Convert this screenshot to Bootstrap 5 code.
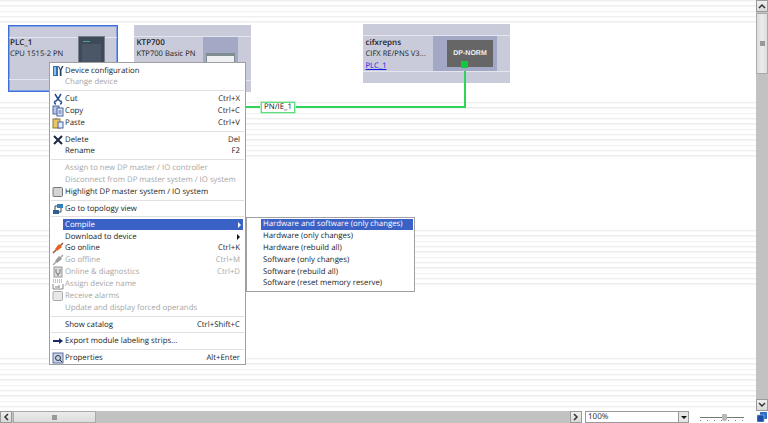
<!DOCTYPE html>
<html lang="en">
<head>
<meta charset="utf-8">
<title>Devices and networks</title>
<link rel="stylesheet" href="https://cdn.jsdelivr.net/npm/bootstrap@5.3.0/dist/css/bootstrap.min.css">
<style>
html,body{height:423px;overflow:hidden;background:#fff}
body{font-family:"Open Sans","Noto Sans",sans-serif;font-size:7.8px;color:#222;line-height:12px;text-rendering:geometricPrecision}
.shell{width:768px;height:423px}
.upper{height:411px;flex:none}
.sheet{width:756px;height:411px;overflow:hidden;
 background-color:#fff;
 background-image:repeating-linear-gradient(to bottom,#ececec 0,#f2f2f2 1px,#fff 2px,#fff 5.33px),repeating-linear-gradient(to bottom,#ececec 0,#f2f2f2 1px,#fff 2px,#fff 5.33px),repeating-linear-gradient(to bottom,#ececec 0,#f2f2f2 1px,#fff 2px,#fff 5.33px),repeating-linear-gradient(to bottom,#ececec 0,#f2f2f2 1px,#fff 2px,#fff 5.33px);
 background-repeat:no-repeat;background-size:100% 23px,100% 55px,100% 55px,100% 53px;background-position:0 0,0 102px,0 230px,0 358px}
.vbar{width:12px;background:#c2c2c2}
.arrow-btn{width:12px;height:12px;flex:none;background:linear-gradient(#f0f0f0,#d8d8d8);border:1px solid #9a9a9a;display:flex;align-items:center;justify-content:center}
.thumb-v{width:12px;height:61px;margin-top:1px;background:linear-gradient(to right,#dcdcdc,#ececec,#dcdcdc);border:1px solid #aaa;display:flex;align-items:center;justify-content:center}
.grip{width:5px;height:5px;background:#999}
.hbar{height:12px;background:#fff;flex:none}
.hbar-track{width:582px;flex:none;background:#c2c2c2}
.thumb-h{width:83px;height:12px;flex:none;margin-left:1px;background:linear-gradient(#ececec,#dcdcdc);border:1px solid #aaa;display:flex;align-items:center;justify-content:center}
.zoombox{width:104px;height:12px;flex:none;background:#fff;border:1px solid #9a9a9a;margin-left:3px;font-size:8px;line-height:10px;padding-left:2px;color:#222;position:relative}
.zoomdrop{position:absolute;right:0;top:0;bottom:0;width:10px;background:#e6e6e6;border-left:1px solid #9a9a9a;display:flex;align-items:center;justify-content:center}
.tri-d{width:0;height:0;border-left:3px solid transparent;border-right:3px solid transparent;border-top:3px solid #111}
.slider{width:67px;height:12px;flex:none;background:#fff;position:relative}
.slide-line{position:absolute;left:11px;right:12px;top:6px;height:1px;background:#777}
.slide-dots{position:absolute;left:11px;right:12px;top:9px;height:1px;background:repeating-linear-gradient(to right,#777 0 1px,transparent 1px 7px)}
.slide-knob{position:absolute;left:33px;top:3px;width:5px;height:7px;background:#b8b8b8;border-radius:1px 1px 3px 3px}
.corner{width:12px;height:12px;flex:none;display:flex;align-items:center;justify-content:center}
.device{position:absolute;background:#c9cbdb;color:#222}
.device::before,.device::after{content:"";position:absolute;left:0;right:0;height:1px;background:#e4e5ee}
.device::before{top:11px}.device::after{bottom:11px}
.dev-plc{left:8px;top:25px;width:110px;height:67px;border:1px solid #3f72d8;outline:1px solid #7ea0e4;outline-offset:-2px}
.dev-ktp{left:134px;top:25px;width:117px;height:67px}
.dev-cifx{left:363px;top:24px;width:147px;height:59px}
.dev-text{position:absolute;left:1px;top:12px;white-space:nowrap;z-index:1;line-height:10.5px;font-size:7.6px}
.dev-ktp .dev-text{left:2.5px;top:13px}
.dev-cifx .dev-text{left:2.5px;top:14px}
.dev-name{font-weight:600;font-size:8px}
.dev-link{color:#1a1ae0;text-decoration:underline;display:block;margin-top:2px}
.rack{position:absolute;left:69px;top:10px;width:27px;height:40px;background:#3f4a58;border:1px solid #76808c;z-index:1}
.rack-led{width:7px;height:1px;background:#3fa89a;margin:4px 0 0 4px}
.rack-in{height:36px;margin:2px 3px 0;background:#4b5767}
.ktp-bay{position:absolute;left:69px;top:12px;width:35px;height:36px;background:#a3a8c4;z-index:1;padding:16px 3px 0}
.ktp-screen{height:20px;background:#eef0f2;border:1px solid #7f8c92;border-top-width:3px}
.cifx-bay{position:absolute;left:70px;top:12px;width:64px;height:35px;background:#a3a8c4;z-index:1;padding:4px 0 0 14px}
.cifx-chip{width:46px;height:27px;background:#666;color:#f0f0f0;font-weight:700;font-size:7px;line-height:27px;text-align:center;font-family:"Liberation Sans",sans-serif}
.port{position:absolute;left:461px;top:61px;width:7px;height:7px;background:#12c83c;z-index:2}
.wire-v{position:absolute;left:464px;top:68px;width:2px;height:40px;background:#2fd45a}
.wire-h{position:absolute;left:246px;top:106px;width:220px;height:2px;background:#2fd45a}
.wire-tag{position:absolute;left:261px;top:102px;width:34px;height:11px;background:#fff;border:1px solid #5fdc7e;outline:1px solid #c0f0cc;font-size:7.8px;line-height:9px;text-align:center;font-weight:500;color:#111}
.ctx.dropdown-menu{position:absolute;border-radius:0;min-width:0;padding:1.6px 1px 1px;border:1px solid #a0a0a0;background:#fff;font-size:7.8px;box-shadow:none;margin:0;z-index:5}
.ctx-main{left:49px;top:62px;width:197px;height:303px}
.ctx-sub.dropdown-menu{left:246px;top:217px;width:169px;height:75px;z-index:6;padding-top:.5px}
.ctx .dropdown-item{width:auto;display:flex;align-items:center;height:11.9px;line-height:12px;padding:0 4px 0 14px;color:#222;position:relative;font-size:7.8px;white-space:nowrap}
.ctx .dropdown-item.off{color:#a6a6a6}
.ctx .dropdown-item.hot{background:#3a62c6;color:#fff;margin:.6px 1px .3px 12px;padding-left:2px;padding-right:2px;height:11px}
.ctx-sub .dropdown-item{padding-left:15px;height:11.8px}
.ctx-sub .dropdown-item.hot{margin:.4px 0 .4px 13px;padding-left:2px;height:11px}
.ctx .dropdown-divider{margin:1.9px 0;border-top:1px solid #e0e0e0;opacity:1;height:1px}
.ctx .ico{position:absolute;left:1px;top:0;width:12px;height:12px}
.keys{margin-left:auto;padding-left:8px}
.tri-r{margin-left:auto;width:0;height:0;border-top:3px solid transparent;border-bottom:3px solid transparent;border-left:3px solid #111}
.hot .tri-r{border-left-color:#fff}
</style>
</head>
<body>
<div class="shell d-flex flex-column">
  <div class="upper d-flex">
    <div class="sheet position-relative flex-shrink-0">
      <div class="device dev-plc">
        <div class="dev-text"><div class="dev-name">PLC_1</div><div>CPU 1515-2 PN</div></div>
        <div class="rack"><div class="rack-led"></div><div class="rack-in"></div></div>
      </div>
      <div class="device dev-ktp">
        <div class="dev-text"><div class="dev-name">KTP700</div><div>KTP700 Basic PN</div></div>
        <div class="ktp-bay"><div class="ktp-screen"></div></div>
      </div>
      <div class="device dev-cifx">
        <div class="dev-text"><div class="dev-name">cifxrepns</div><div>CIFX RE/PNS V3...</div><a class="dev-link" href="#">PLC_1</a></div>
        <div class="cifx-bay"><div class="cifx-chip">DP-NORM</div></div>
      </div>
      <div class="port"></div>
      <div class="wire-v"></div>
      <div class="wire-h"></div>
      <div class="wire-tag">PN/IE_1</div>

      <div class="ctx ctx-main dropdown-menu show">
        <a class="dropdown-item" href="#"><svg class="ico" viewBox="0 0 12 12"><rect x="1" y="1" width="5" height="10" fill="#2f6fb5"/><rect x="2" y="2" width="2" height="8" fill="#8fc0e8"/><path d="M7 1l1.5 3L10 1h1.5L9.5 5v6H7.8V5L6 1z" fill="#23405f"/></svg>Device configuration</a>
        <a class="dropdown-item off" href="#">Change device</a>
        <div class="dropdown-divider"></div>
        <a class="dropdown-item" href="#"><svg class="ico" viewBox="0 0 12 12"><path d="M3 1l3 5 3-5M4 11a1.5 1.5 0 1 1 0-3l2-2 2 2a1.5 1.5 0 1 1 0 3" fill="none" stroke="#2a4f8f" stroke-width="1.5"/></svg>Cut<span class="keys">Ctrl+X</span></a>
        <a class="dropdown-item" href="#"><svg class="ico" viewBox="0 0 12 12"><rect x="1" y="1" width="6" height="8" fill="#b9c8e6" stroke="#4a64a0"/><rect x="5" y="3" width="6" height="8" fill="#dfe6f5" stroke="#4a64a0"/><path d="M6.5 6h3M6.5 8h3" stroke="#4a64a0"/></svg>Copy<span class="keys">Ctrl+C</span></a>
        <a class="dropdown-item" href="#"><svg class="ico" viewBox="0 0 12 12"><rect x="1" y="2" width="7" height="9" fill="#e8c866" stroke="#927a2c"/><rect x="3" y="1" width="3" height="2" fill="#999"/><rect x="6" y="5" width="5" height="6" fill="#e6ecf8" stroke="#4a64a0"/></svg>Paste<span class="keys">Ctrl+V</span></a>
        <div class="dropdown-divider"></div>
        <a class="dropdown-item" href="#"><svg class="ico" viewBox="0 0 12 12"><path d="M2 2l8 8M10 2l-8 8" stroke="#1c2740" stroke-width="2"/></svg>Delete<span class="keys">Del</span></a>
        <a class="dropdown-item" href="#">Rename<span class="keys">F2</span></a>
        <div class="dropdown-divider"></div>
        <a class="dropdown-item off" href="#">Assign to new DP master / IO controller</a>
        <a class="dropdown-item off" href="#">Disconnect from DP master system / IO system</a>
        <a class="dropdown-item" href="#"><svg class="ico" viewBox="0 0 12 12"><rect x="1" y="1.5" width="9.5" height="9" rx="1" fill="#d4d4d4" stroke="#777"/></svg>Highlight DP master system / IO system</a>
        <div class="dropdown-divider"></div>
        <a class="dropdown-item" href="#"><svg class="ico" viewBox="0 0 12 12"><rect x="5" y="1" width="6" height="4" fill="#2f7fbf"/><rect x="1" y="7" width="6" height="4" fill="#2f5f8f"/><path d="M3 7V3h2M9 5v4H7" fill="none" stroke="#444"/></svg>Go to topology view</a>
        <div class="dropdown-divider"></div>
        <a class="dropdown-item hot" href="#">Compile<span class="tri-r"></span></a>
        <a class="dropdown-item" href="#">Download to device<span class="tri-r"></span></a>
        <a class="dropdown-item" href="#"><svg class="ico" viewBox="0 0 12 12"><path d="M1 11l3-3M8 4l3-3" stroke="#8a5a3a" stroke-width="1.5"/><path d="M3 7l4-5 3 3-5 4z" fill="#e8601c"/></svg>Go online<span class="keys">Ctrl+K</span></a>
        <a class="dropdown-item off" href="#"><svg class="ico" viewBox="0 0 12 12"><path d="M1 11l3-3M8 4l3-3" stroke="#aaa" stroke-width="1.5"/><path d="M3 7l4-5 3 3-5 4z" fill="#999"/></svg>Go offline<span class="keys">Ctrl+M</span></a>
        <a class="dropdown-item off" href="#"><svg class="ico" viewBox="0 0 12 12"><rect x="2" y="1" width="8" height="10" fill="#ddd" stroke="#999"/><path d="M4 3v3a2 2 0 0 0 4 0V3M6 8v2" fill="none" stroke="#777"/></svg>Online &amp; diagnostics<span class="keys">Ctrl+D</span></a>
        <a class="dropdown-item off" href="#"><svg class="ico" viewBox="0 0 12 12"><path d="M1 2h10M1 4h10" stroke="#888" stroke-dasharray="1 1"/><path d="M1 6v5h10V6M3 9h4M7 7v3" fill="none" stroke="#888"/></svg>Assign device name</a>
        <a class="dropdown-item off" href="#"><svg class="ico" viewBox="0 0 12 12"><rect x="1" y="1.5" width="9.5" height="9" rx="1" fill="#e8e8e8" stroke="#aaa"/></svg>Receive alarms</a>
        <a class="dropdown-item off" href="#">Update and display forced operands</a>
        <div class="dropdown-divider"></div>
        <a class="dropdown-item" href="#">Show catalog<span class="keys">Ctrl+Shift+C</span></a>
        <div class="dropdown-divider"></div>
        <a class="dropdown-item" href="#"><svg class="ico" viewBox="0 0 12 12"><path d="M1 6h8" stroke="#1c2a6a" stroke-width="2"/><path d="M7 3l4 3-4 3z" fill="#1c2a6a"/></svg>Export module labeling strips...</a>
        <div class="dropdown-divider"></div>
        <a class="dropdown-item" href="#"><svg class="ico" viewBox="0 0 12 12"><rect x="1" y="1" width="10" height="10" fill="#c4d2ea" stroke="#5a6f9c"/><circle cx="6" cy="6" r="2.5" fill="none" stroke="#333"/><path d="M8 8l2 2" stroke="#333"/></svg>Properties<span class="keys">Alt+Enter</span></a>
      </div>

      <div class="ctx ctx-sub dropdown-menu show">
        <a class="dropdown-item hot" href="#">Hardware and software (only changes)</a>
        <a class="dropdown-item" href="#">Hardware (only changes)</a>
        <a class="dropdown-item" href="#">Hardware (rebuild all)</a>
        <a class="dropdown-item" href="#">Software (only changes)</a>
        <a class="dropdown-item" href="#">Software (rebuild all)</a>
        <a class="dropdown-item" href="#">Software (reset memory reserve)</a>
      </div>
    </div>
    <div class="vbar d-flex flex-column">
      <div class="arrow-btn"><svg width="8" height="6" viewBox="0 0 8 6"><path d="M1 5l3-3 3 3" fill="none" stroke="#333" stroke-width="1.5"/></svg></div>
      <div class="thumb-v"><span class="grip"></span></div>
      <div class="arrow-btn mt-auto"><svg width="8" height="6" viewBox="0 0 8 6"><path d="M1 1l3 3 3-3" fill="none" stroke="#333" stroke-width="1.5"/></svg></div>
    </div>
  </div>
  <div class="hbar d-flex align-items-stretch">
    <div class="hbar-track d-flex">
      <div class="arrow-btn"><svg width="6" height="8" viewBox="0 0 6 8"><path d="M5 1L2 4l3 3" fill="none" stroke="#333" stroke-width="1.5"/></svg></div>
      <div class="thumb-h"><span class="grip"></span></div>
      <div class="arrow-btn ms-auto"><svg width="6" height="8" viewBox="0 0 6 8"><path d="M1 1l3 3-3 3" fill="none" stroke="#333" stroke-width="1.5"/></svg></div>
    </div>
    <div class="zoombox">100%<span class="zoomdrop"><span class="tri-d"></span></span></div>
    <div class="slider"><span class="slide-line"></span><span class="slide-dots"></span><span class="slide-knob"></span></div>
    <div class="corner"><svg width="10" height="10" viewBox="0 0 10 10"><rect x="3" y="0" width="7" height="7" fill="#2f6fc8"/><rect x="0" y="3" width="7" height="7" fill="#1c4fa8" stroke="#9cc0ee" stroke-width=".6"/></svg></div>
  </div>
</div>
<script src="https://cdn.jsdelivr.net/npm/bootstrap@5.3.0/dist/js/bootstrap.bundle.min.js"></script>
</body>
</html>
